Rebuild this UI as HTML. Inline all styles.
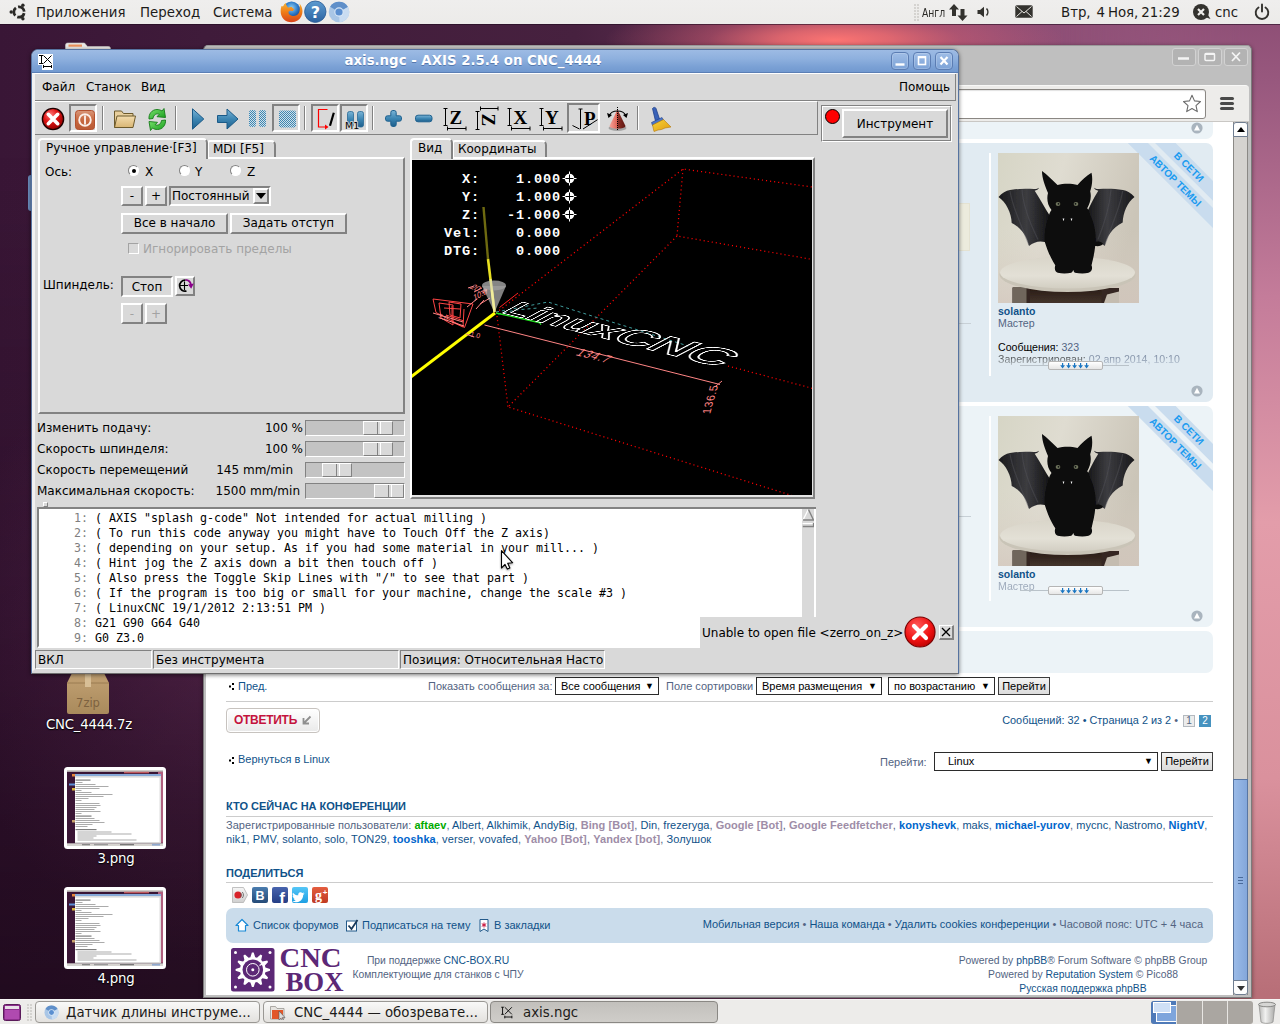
<!DOCTYPE html>
<html lang="ru">
<head>
<meta charset="utf-8">
<title>axis.ngc - AXIS 2.5.4 on CNC_4444</title>
<style>
*{box-sizing:border-box;margin:0;padding:0}
html,body{width:1280px;height:1024px;overflow:hidden}
body{position:relative;font-family:"DejaVu Sans","Liberation Sans",sans-serif;font-size:13.33px;color:#1a1a1a;
 background:#2c0a26;}
.abs{position:absolute}
#desk{left:0;top:0;width:1280px;height:1024px;
 background:
  radial-gradient(ellipse 230px 42px at 835px 40px, rgba(252,116,114,1) 0%, rgba(246,112,114,.8) 25%, rgba(225,100,115,.42) 55%, rgba(200,90,120,0) 100%),
  radial-gradient(ellipse 300px 330px at 250px 640px, rgba(125,58,110,.55) 0%, rgba(112,50,100,.26) 55%, rgba(100,45,90,0) 100%),
  linear-gradient(90deg,#391636 0,#3c1838 8%,#3f1b3a 16%,#47213f 45%,#6a3459 62%,#8a4a72 76%,#9b5c82 100%);
}
#deskr{left:1060px;top:0;width:220px;height:1024px;background:linear-gradient(180deg,#8b4c73 0,#98587e 8%,#c47c9a 29%,#e39daa 51%,#da919d 76%,#b86f78 97%);-webkit-mask-image:linear-gradient(90deg,transparent 0,rgba(0,0,0,.55) 50%,#000 85%);mask-image:linear-gradient(90deg,transparent 0,rgba(0,0,0,.55) 50%,#000 85%)}
#deskdark{left:0;top:0;width:700px;height:1024px;background:linear-gradient(180deg,rgba(12,0,10,0) 15%,rgba(12,0,10,.22) 60%,rgba(10,0,8,.52) 100%);-webkit-mask-image:linear-gradient(90deg,#000 0,#000 30%,transparent 100%);mask-image:linear-gradient(90deg,#000 0,#000 30%,transparent 100%)}

/* ---------- top panel ---------- */
#tpanel{left:0;top:0;width:1280px;height:24px;background:linear-gradient(#efeeed,#ecebe9);box-shadow:0 1px 0 rgba(30,10,30,.55);font-size:13.33px;color:#1c1b19}
#tpanel span{position:absolute;top:4.5px;white-space:nowrap;line-height:16px}
/* ---------- bottom panel ---------- */
#bpanel{left:0;top:999px;width:1280px;height:25px;background:#edecea;border-top:1px solid #f6f5f4;font-size:13.33px;color:#1c1b19}
.dl{position:absolute;text-align:center;color:#fff;font-size:13.33px;letter-spacing:-.25px;line-height:18px;text-shadow:0 1px 1px #000,0 0 2px rgba(0,0,0,.8);white-space:nowrap}
.task{position:absolute;top:1px;height:22px;border:1px solid #9a9894;border-radius:4px;background:linear-gradient(#f9f9f8,#e3e1de);white-space:nowrap;overflow:hidden}
.task b{position:absolute;top:2px;font-weight:normal;line-height:17px}

/* ---------- chrome window ---------- */
#chrome{left:203px;top:45px;width:1049px;height:953px;background:#bfbfbf;border:1px solid #7b7b7b;border-top-color:#9a9a9a;border-radius:5px 5px 0 0;box-shadow:0 1px 4px rgba(0,0,0,.45);overflow:hidden}
#cx{left:-204px;top:-46px;width:0;height:0;font-family:"Liberation Sans","DejaVu Sans",sans-serif;font-size:11px;color:#536482}
#cx div,#cx span,#cx svg,#cx a{position:absolute}
.cb{width:24px;height:18px;background:#b3b3b3;border:1px solid #d2d2d2;border-radius:3px}
#cx a{color:#105289;white-space:nowrap}
#cx .p{white-space:nowrap;line-height:14px}
.sel{background:#fff;border:1px solid #2b2b2b;color:#000;font-size:11px;line-height:16px;padding-left:5px;white-space:nowrap;height:18px}
.sel:after{content:"▼";position:absolute;right:4px;top:0;font-size:9px;color:#000}
.go{background:linear-gradient(#f3f3f3,#dcdcdc);border:1px solid #3c3c3c;color:#000;font-size:11px;line-height:16px;text-align:center;height:18px;white-space:nowrap}
.post{border-radius:0 7px 7px 0}
.hr{height:1px;background:#ccc}
.rib{width:200px;height:200px;transform:rotate(45deg);transform-origin:50% 50%}
.rib b{left:-40px;width:280px;height:19px;background:#c9dcee;color:#1b9df2;font-size:11px;font-weight:bold;text-align:center;line-height:19px;white-space:nowrap}
.hnd{left:1020px;width:109px;height:9px}
.hnd:before{content:"";position:absolute;left:0;top:4px;width:109px;height:1px;background:#b9c2c9}
.hnd:after{content:"";position:absolute;left:28px;top:0;width:53px;height:7px;background:linear-gradient(#fff,#e6e6e6);border:1px solid #b5b5b5;border-radius:2px}
.hnd svg{left:40px;top:1.500px;z-index:2}
.h3{font-weight:bold;font-size:11px;color:#105289;white-space:nowrap;line-height:14px}
#cx a.s{position:static}
#cx a.g{color:#00aa00;font-weight:bold}
#cx a.b{color:#9e8da7;font-weight:bold}
#cx a.m{color:#0066cc;font-weight:bold}
.pg{width:12px;height:12px;line-height:10px;border:1px solid #b4bac0;background:#ececec;color:#536482;text-align:center;font-size:10px}
.pg.cur{background:#4692bf;border-color:#4692bf;color:#fff}

/* ---------- AXIS window ---------- */
#axis{left:31px;top:49px;width:928px;height:625px;background:#d9d9d9;border:1px solid #5673a0;border-bottom-color:#6e6e6e;border-radius:7px 7px 0 0;box-shadow:0 1px 4px rgba(0,0,0,.55)}
#ax{left:-32px;top:-50px;width:0;height:0}
#ax div,#ax span,#ax svg{position:absolute}
#atitle{left:32px;top:50px;width:926px;height:23px;background:linear-gradient(#9dbbe4,#8eb0de 40%,#7ba1d5 75%,#7299d0);border-radius:6px 6px 0 0;border-bottom:1px solid #5b7fb5;color:#fff;font-weight:bold;font-size:13.33px;text-align:center;line-height:21px;text-shadow:0 1px 0 #5578ad;padding-right:44px}
#aframe{left:32px;top:73px;width:926px;height:599px;border:3px solid #f1f1f1;border-top-width:1px;border-top-color:#fff;border-bottom-color:#d9d9d9;border-right-color:#d9d9d9}
.tb{border-radius:4px;border:1px solid #5b7db3;background:linear-gradient(#9fbde6,#7da3d7);box-shadow:inset 0 0 0 1px rgba(255,255,255,.18)}
.rs{border:2px solid;border-color:#fff #828282 #828282 #fff;background:#d9d9d9}
.sk{border:2px solid;border-color:#828282 #fff #fff #828282;background:#d9d9d9}
.rs1{border:1px solid;border-color:#fff #828282 #828282 #fff}
.sk1{border:1px solid;border-color:#828282 #fff #fff #828282}
.t{white-space:nowrap;line-height:16px;font-size:12px;color:#000}
.btn{text-align:center;white-space:nowrap;font-size:12px;color:#000}
.vsep{width:2px;border-left:1px solid #828282;border-right:1px solid #fff}
.mono{font-family:"DejaVu Sans Mono","Liberation Mono",monospace;font-size:11.63px;white-space:pre;line-height:15px;color:#000}
.radio{width:11px;height:11px;border-radius:50%;background:#fff;border:1px solid;border-color:#828282 #fff #fff #828282}
.radio u{position:absolute;left:3px;top:3px;width:4px;height:4px;border-radius:50%;background:#000}
.tr{left:305px;width:100px;height:16px;background:#c3c3c3;border:1px solid;border-color:#828282 #fff #fff #828282}
.th{top:0;width:30px;height:14px;background:#d9d9d9;border:1px solid;border-color:#fff #828282 #828282 #fff}
.th:after{content:"";position:absolute;left:13px;top:0;width:2px;height:12px;border-left:1px solid #828282;border-right:1px solid #fff}
.mono i{font-style:normal;color:#7f7f7f}
</style>
</head>
<body>
<div id="desk" class="abs"></div>
<div id="deskr" class="abs"></div>
<div id="deskdark" class="abs"></div>

<!-- DESKTOP ICONS -->
<div id="icons" class="abs" style="left:0;top:0;width:0;height:0">
 <svg class="abs" style="left:0;top:0" width="0" height="0"><defs>
  <g id="thumb">
   <rect x="0" y="0" width="102" height="82" rx="3.500" fill="#fff"/>
   <rect x="3" y="3" width="96" height="76" fill="#3a1535"/>
   <rect x="3" y="3" width="96" height="1.800" fill="#cfcdc9"/>
   <rect x="60" y="4.800" width="25" height="1.500" fill="#e26a6a" opacity=".8"/>
   <rect x="94" y="4.800" width="5" height="71" fill="#b0607f"/>
   <rect x="8" y="7" width="3" height="2.500" fill="#e8863a"/><rect x="5" y="16.500" width="6" height="2" fill="#5b8fd6"/><rect x="8" y="21" width="3" height="2.500" fill="#d9b53a"/><rect x="8" y="53" width="3" height="2.500" fill="#c7a16a"/>
   <rect x="11" y="7" width="86" height="69" fill="#fff"/>
   <rect x="11" y="7" width="86" height="2" fill="#86a9d8"/><rect x="11" y="9" width="86" height="1.600" fill="#dcdcdc"/>
   <rect x="95.500" y="10" width="1.500" height="66" fill="#dedede"/><rect x="11" y="75" width="86" height="1.300" fill="#d8d8d8"/>
   <g fill="#8f8f8f" opacity=".75">
    <rect x="11.500" y="12.500" width="15" height="1.200" fill="#555"/><rect x="11.500" y="15" width="7" height="1"/><rect x="11.500" y="17" width="20" height="1"/><rect x="11.500" y="19" width="33" height="1"/><rect x="11.500" y="21" width="24" height="1"/><rect x="11.500" y="23" width="6" height="1"/><rect x="11.500" y="25" width="16" height="1"/><rect x="11.500" y="27" width="37" height="1"/><rect x="11.500" y="29" width="28" height="1"/><rect x="11.500" y="31" width="13" height="1"/><rect x="11.500" y="33" width="6" height="1"/>
    <rect x="11.500" y="36" width="24" height="1"/><rect x="11.500" y="38" width="25" height="1"/><rect x="11.500" y="40" width="21" height="1"/><rect x="11.500" y="42" width="19" height="1"/><rect x="11.500" y="44" width="25" height="1"/><rect x="11.500" y="46" width="6" height="1"/>
    <rect x="11.500" y="48.500" width="16" height="1.200" fill="#555"/><rect x="11.500" y="51" width="19" height="1"/><rect x="11.500" y="53" width="24" height="1"/><rect x="11.500" y="55" width="29" height="1"/><rect x="11.500" y="57" width="17" height="1"/><rect x="11.500" y="59" width="12" height="1"/>
    <rect x="11.500" y="62" width="21" height="1.200" fill="#555"/><rect x="13.500" y="64.500" width="34" height="1"/><rect x="13.500" y="66.500" width="54" height="1"/><rect x="13.500" y="68.500" width="19" height="1"/><rect x="13.500" y="70.500" width="16" height="1"/><rect x="13.500" y="72.500" width="59" height="1"/>
   </g>
   <rect x="3" y="76.300" width="96" height="2.700" fill="#d6d4d0"/><rect x="18" y="77" width="8" height="1.300" fill="#888"/><rect x="30" y="77" width="14" height="1.300" fill="#999"/><rect x="56" y="77" width="14" height="1.300" fill="#777"/><rect x="88" y="76.800" width="8" height="1.800" fill="#8fa9d0"/>
  </g>
  <linearGradient id="boxg" x1="0" y1="0" x2="0" y2="1"><stop offset="0" stop-color="#c2a173"/><stop offset="1" stop-color="#a98a5c"/></linearGradient>
 </defs></svg>
 <!-- folder peeking behind AXIS -->
 <svg class="abs" style="left:65px;top:42px" width="46" height="8" viewBox="0 0 46 8"><path d="M.5 8V3a2 2 0 0 1 2-2h17l3 3.500h21a2 2 0 0 1 2 2V8z" fill="#e9e8e6" stroke="#c8c6c2" stroke-width=".6"/><rect x="3.500" y="2.500" width="13.500" height="2.200" fill="#e9905a"/></svg>
 <div class="abs" style="left:28px;top:175px;width:10px;height:36px;background:#6b8dbe;border-radius:3px"></div>
 <!-- 7zip box -->
 <svg class="abs" style="left:66px;top:673px" width="44" height="42" viewBox="0 0 44 42"><path d="M1 10L6 0h32l5 10v29a2 2 0 0 1-2 2H3a2 2 0 0 1-2-2z" fill="url(#boxg)"/><path d="M1 10h42" stroke="#9a7d52" stroke-width="1"/><rect x="19" y="0" width="6" height="14" fill="#d8bf96"/><text x="22" y="34" text-anchor="middle" font-family="DejaVu Sans,sans-serif" font-size="11.500" fill="#7d6240">7zip</text></svg>
 <div class="dl" style="left:29px;top:715.500px;width:120px">CNC_4444.7z</div>
 <svg class="abs" style="left:64px;top:767px" width="102" height="82"><use href="#thumb"/></svg>
 <div class="dl" style="left:56px;top:849.500px;width:120px">3.png</div>
 <svg class="abs" style="left:64px;top:887px" width="102" height="82"><use href="#thumb"/></svg>
 <div class="dl" style="left:56px;top:969.500px;width:120px">4.png</div>
</div>

<!-- CHROME -->
<div id="chrome" class="abs"><div id="cx" class="abs">
 <!-- title buttons -->
 <div class="cb" style="left:1172px;top:48px"></div><div class="cb" style="left:1198px;top:48px"></div><div class="cb" style="left:1224px;top:48px"></div>
 <svg style="left:1172px;top:48px" width="76" height="18" viewBox="0 0 76 18"><g fill="none" stroke="#f4f4f4" stroke-width="1.8"><path d="M6 10.5h11" stroke-width="2.4"/><rect x="33" y="5.5" width="9.5" height="7" rx="1" stroke-width="1.5"/><path d="M33 6h9.5" stroke-width="2"/><path d="M60 4.5l8 8.5M68 4.5l-8 8.5"/></g></svg>
 <!-- toolbar -->
 <div style="left:206px;top:85px;width:1043px;height:37px;background:#edecea;border-top:1px solid #f8f8f7;border-bottom:1px solid #c9c7c4;border-radius:0 4px 0 0"></div>
 <div style="left:600px;top:89px;width:606px;height:30px;background:#fff;border:1px solid #8a8783;border-radius:3px;box-shadow:inset 0 1px 1px rgba(0,0,0,.12)"></div>
 <svg style="left:1182px;top:94px" width="20" height="19" viewBox="0 0 20 19"><path d="M10 1.3l2.5 5.6 6 .6-4.5 4.1 1.3 6-5.3-3.1-5.3 3.1 1.3-6L1.5 7.5l6-.6z" fill="#fff" stroke="#6b6b6b" stroke-width="1.1" stroke-linejoin="round"/></svg>
 <div style="left:1220px;top:97px;width:14px;height:3px;background:#4a4a4a;border-radius:1.500px;box-shadow:0 5px 0 #4a4a4a,0 10px 0 #4a4a4a"></div>
 <!-- page -->
 <div id="page" style="left:206px;top:122px;width:1027px;height:873px;background:#fff"></div>
 <svg width="0" height="0" style="left:0;top:0"><defs>
  <linearGradient id="catbg" x1="0" y1="0" x2="1" y2=".3"><stop offset="0" stop-color="#d6d5c5"/><stop offset=".45" stop-color="#dfdcd1"/><stop offset="1" stop-color="#cbc5b8"/></linearGradient><linearGradient id="catvg" x1="0" y1="0" x2="0" y2="1"><stop offset=".5" stop-color="#d8cfc4" stop-opacity="0"/><stop offset="1" stop-color="#d3c6bd" stop-opacity=".7"/></linearGradient><linearGradient id="stsh" x1="0" y1="0" x2="0" y2="1"><stop offset="0" stop-color="#2a1d17"/><stop offset="1" stop-color="#43342b"/></linearGradient><linearGradient id="wingg2" x1="1" y1="0" x2="0" y2="0"><stop offset="0" stop-color="#1a1a1c"/><stop offset=".55" stop-color="#3c3c40"/><stop offset="1" stop-color="#121214"/></linearGradient>
  <linearGradient id="stoolg" x1="0" y1="0" x2="0" y2="1"><stop offset="0" stop-color="#d9d5c9"/><stop offset=".6" stop-color="#e3e0d6"/><stop offset="1" stop-color="#d2cec2"/></linearGradient>
  <linearGradient id="wingg" x1="0" y1="0" x2="1" y2="0"><stop offset="0" stop-color="#1a1a1c"/><stop offset=".55" stop-color="#3c3c40"/><stop offset="1" stop-color="#121214"/></linearGradient>
  <filter id="soft" x="0" y="0" width="1" height="1"><feGaussianBlur stdDeviation=".45"/></filter>
  <g id="cat" filter="url(#soft)">
   <rect x="-2" y="-2" width="145" height="154" fill="url(#catbg)"/>
   <rect width="141" height="150" fill="url(#catvg)"/>
   <path d="M14.500 150v-15h106.500v15z" fill="#352720"/>
   <path d="M32 150v-14h71.500v14z" fill="url(#stsh)"/>
   <path d="M14.500 150v-16h14v16z" fill="#6f665c"/><path d="M106 150l3-8.500 12-3v11.500z" fill="#c4bcb0"/>
   <ellipse cx="69.500" cy="121.500" rx="68" ry="17.500" fill="#c9c4b7"/>
   <ellipse cx="69.500" cy="119.500" rx="67.500" ry="16" fill="url(#stoolg)"/>
   <path d="M.5 44C4 40 8 37.500 12 37c8-1.500 17-1.500 24-1 2 .2 3.500-.300 5-1.200-.8 1.700-2.300 2.700-4.300 2.900C42 46 47 55 52 63l-5 26c-6-1.500-11 0-16 4-2-9-7-18-17.300-23C13.500 60 8 49 .5 44z" fill="url(#wingg)"/>
   <path d="M136.500 44c-3.500-4-7.500-6.500-11.500-7-8-1.500-17-1.500-24-1-2 .2-3.500-.300-5-1.200.8 1.700 2.300 2.700 4.300 2.900C95 46 91 55 87 63l6 26c5.500-1.500 9.500 0 13.700 4 2-9 7-18 18-23.500C125 60 129.500 49 136.500 44z" fill="url(#wingg2)"/>
   <path d="M12 38c2 12 6 22 19 54M24 36.500c1 14 6 30 16 50M124.700 38c-2 12-6 22-18 54M113 36.500c-1 14-5 30-13 50" fill="none" stroke="#55555a" stroke-opacity=".45" stroke-width="1.200"/>
   <path d="M44 18c5 3.500 11 9.500 15.500 14 6-1.600 14-1.600 20 0 4-4.500 9-9.500 14-12.200 1.500 6 .5 13-1.300 18.500 1.500 6 0 12-3 17 1.500 2 2.500 4.500 3 7 3.500 7 6 17 5.500 26 2.500-.5 6 .5 7.500 2.500-1 2-4.500 2.800-8 2.300-.5 6-2 12-3.700 19.200 1.500 3.500 0 6.500-3 7.500-4 1-9 .8-13.500 0-1-.8-1.500-1.700-1.700-3-.3 1.300-1 2.300-2 3-4 .8-9 1-13.500 0-3-1-3.500-4.500-2.500-7.500C51.500 103 49 96 46.500 88c0-8 1-16 4-24 .5-2.500 1.500-5 3-7-4-5-5-11-3.500-17C47 33 44 25 44 18z" fill="#0a0a0b"/>
   <ellipse cx="60" cy="51" rx="2.400" ry="1.900" fill="#6e735c"/><ellipse cx="78" cy="51" rx="2.400" ry="1.900" fill="#6e735c"/><circle cx="60.500" cy="50.800" r=".9" fill="#111"/><circle cx="77.500" cy="50.800" r=".9" fill="#111"/>
   <path d="M64.600 65.500l.9 2.800.9-2.800zM72.600 65.500l.9 2.800.9-2.800z" fill="#f4f4f4"/>
  </g>
  <g id="topic"><circle cx="6" cy="6" r="5.600" fill="#a9b4be"/><path d="M6 2.800L9 8.500H3z" fill="#fff"/></g>
 </defs></svg>
 <!-- post 1 tail -->
 <div class="post" style="left:206px;top:122px;width:1007px;height:17px;background:#ecf3f7;border-radius:0 0 7px 0"></div>
 <svg style="left:1191px;top:122px" width="12" height="12"><use href="#topic"/></svg>
 <!-- post 2 -->
 <div class="post" style="left:206px;top:143px;width:1007px;height:259px;background:#e1ebf2;overflow:hidden">
 </div>
 <svg style="left:1120px;top:143px" width="93" height="90" viewBox="1120 143 93 90"><path d="M1155 143h20.600L1213 181v19.700zM1127.800 143H1148l65 65v19.900z" fill="#c9dcee"/><g font-family="Liberation Sans,sans-serif" font-weight="bold" font-size="10" fill="#1c9bf0" text-anchor="middle"><text transform="translate(1186.500 169.500) rotate(45)">В СЕТИ</text><text transform="translate(1173 183) rotate(45)">АВТОР ТЕМЫ</text></g></svg>
 <div style="left:958px;top:203px;width:12px;height:48px;background:#ecebdd;border:1px solid #e4e2d2;border-left:0"></div>
 <div style="left:958px;top:323px;width:13px;height:1px;background:#c8d0d6"></div>
 <div style="left:989px;top:153px;width:2px;height:223px;background:#fff"></div>
 <svg style="left:998px;top:153px" width="141" height="150"><use href="#cat"/></svg>
 <a style="left:998px;top:304px;font-weight:bold;line-height:14px;font-size:10.500px">solanto</a>
 <span class="p" style="left:998px;top:316px;font-size:10.600px">Мастер</span>
 <span class="p" style="left:998px;top:340px;font-size:10.600px"><span style="position:static;color:#000">Сообщения:</span> 323</span>
 <span class="p" style="left:998px;top:352px;opacity:.62;font-size:10.600px"><span style="position:static;color:#000">Зарегистрирован:</span> 02 апр 2014, 10:10</span>
 <div style="left:998px;top:358px;width:200px;height:10px;background:linear-gradient(rgba(225,235,242,0),#e1ebf2)"></div>
 <div class="hnd" style="top:361px"><svg width="30" height="6" viewBox="0 0 30 6"><path id="dar" d="M2 0h1.200v2.200H5L2.600 5.500.2 2.200H2z" fill="#1b76c2"/><use href="#dar" x="6"/><use href="#dar" x="12"/><use href="#dar" x="18"/><use href="#dar" x="24"/></svg></div>
 <svg style="left:1191px;top:385px" width="12" height="12"><use href="#topic"/></svg>
 <!-- post 3 -->
 <div class="post" style="left:206px;top:406px;width:1007px;height:221px;background:#ecf3f7;overflow:hidden">
 </div>
 <svg style="left:1120px;top:406px" width="93" height="90" viewBox="1120 143 93 90"><path d="M1155 143h20.600L1213 181v19.700zM1127.800 143H1148l65 65v19.900z" fill="#c9dcee"/><g font-family="Liberation Sans,sans-serif" font-weight="bold" font-size="10" fill="#1c9bf0" text-anchor="middle"><text transform="translate(1186.500 169.500) rotate(45)">В СЕТИ</text><text transform="translate(1173 183) rotate(45)">АВТОР ТЕМЫ</text></g></svg>
 <div style="left:958px;top:516px;width:13px;height:1px;background:#c8d0d6"></div>
 <div style="left:989px;top:416px;width:2px;height:185px;background:#fff"></div>
 <svg style="left:998px;top:416px" width="141" height="150"><use href="#cat"/></svg>
 <a style="left:998px;top:567px;font-weight:bold;line-height:14px;font-size:10.500px">solanto</a>
 <span class="p" style="left:998px;top:579px;opacity:.5;font-size:10.600px">Мастер</span>
 <div class="hnd" style="top:586px"><svg width="30" height="6" viewBox="0 0 30 6"><use href="#dar"/><use href="#dar" x="6"/><use href="#dar" x="12"/><use href="#dar" x="18"/><use href="#dar" x="24"/></svg></div>
 <svg style="left:1191px;top:610px" width="12" height="12"><use href="#topic"/></svg>
 <!-- box 4 -->
 <div class="post" style="left:206px;top:631px;width:1007px;height:42px;background:#ecf3f7"></div>

 <!-- display options -->
 <svg style="left:229px;top:683px" width="5" height="7" viewBox="0 0 5 7"><path d="M3 0h2v2H3zM0 2.500h2v2H0zM3 5h2v2H3z" fill="#000"/></svg>
 <a style="left:238px;top:680px">Пред.</a>
 <span class="p" style="left:428px;top:679px">Показать сообщения за:</span>
 <div class="sel" style="left:555px;top:677px;width:104px">Все сообщения</div>
 <span class="p" style="left:666px;top:679px">Поле сортировки</span>
 <div class="sel" style="left:756px;top:677px;width:126px">Время размещения</div>
 <div class="sel" style="left:888px;top:677px;width:107px">по возрастанию</div>
 <div class="go" style="left:998px;top:677px;width:52px">Перейти</div>
 <div class="hr" style="left:226px;top:701px;width:987px"></div>
 <div style="left:226px;top:708px;width:94px;height:25px;border:1px solid #c7c3bf;border-radius:4px;background:linear-gradient(#fff,#e9e9e9);box-shadow:0 0 0 1px #fff inset"></div>
 <span style="left:234px;top:713px;font-weight:bold;font-size:12px;line-height:15px;color:#c4133d;letter-spacing:-.28px;white-space:nowrap">ОТВЕТИТЬ</span>
 <svg style="left:302px;top:715px" width="10" height="10" viewBox="0 0 10 10"><path d="M8.500 1.500L2 8M1.500 3v5.500H7" fill="none" stroke="#8f8f8f" stroke-width="1.800"/></svg>
 <span class="p" style="left:878px;top:713px;width:300px;text-align:right;font-size:10.900px"><a style="position:static">Сообщений: 32 • Страница <b style="font-weight:normal">2</b> из <b style="font-weight:normal">2</b></a> •</span>
 <span class="pg" style="left:1183px;top:715px">1</span><span class="pg cur" style="left:1199px;top:715px">2</span>
 <svg style="left:229px;top:757px" width="5" height="7" viewBox="0 0 5 7"><path d="M3 0h2v2H3zM0 2.500h2v2H0zM3 5h2v2H3z" fill="#000"/></svg>
 <a style="left:238px;top:753px">Вернуться в Linux</a>
 <span class="p" style="left:880px;top:755px">Перейти:</span>
 <div class="sel" style="left:934px;top:752px;width:224px;height:19px;padding-left:13px;line-height:17px">Linux</div>
 <div class="go" style="left:1161px;top:752px;width:52px;height:19px;line-height:17px">Перейти</div>
 <span class="h3" style="left:226px;top:799px">КТО СЕЙЧАС НА КОНФЕРЕНЦИИ</span>
 <div class="hr" style="left:226px;top:816px;width:987px"></div>
 <span class="p" style="left:226px;top:818px;letter-spacing:.036px">Зарегистрированные пользователи: <a class="s g">aftaev</a>, <a class="s">Albert</a>, <a class="s">Alkhimik</a>, <a class="s">AndyBig</a>, <a class="s b">Bing [Bot]</a>, <a class="s">Din</a>, <a class="s">frezeryga</a>, <a class="s b">Google [Bot]</a>, <a class="s b">Google Feedfetcher</a>, <a class="s m">konyshevk</a>, <a class="s">maks</a>, <a class="s m">michael-yurov</a>, <a class="s">mycnc</a>, <a class="s">Nastromo</a>, <a class="s m">NightV</a>,</span>
 <span class="p" style="left:226px;top:832px;letter-spacing:.083px"><a class="s">nik1</a>, <a class="s">PMV</a>, <a class="s">solanto</a>, <a class="s">solo</a>, <a class="s">TON29</a>, <a class="s m">tooshka</a>, <a class="s">verser</a>, <a class="s">vovafed</a>, <a class="s b">Yahoo [Bot]</a>, <a class="s b">Yandex [bot]</a>, <a class="s">Золушок</a></span>
 <span class="h3" style="left:226px;top:866px">ПОДЕЛИТЬСЯ</span>
 <div class="hr" style="left:226px;top:882px;width:987px"></div>
 <svg style="left:231px;top:886px" width="100" height="18" viewBox="231 886 100 18">
  <defs><linearGradient id="vkg" x1="0" y1="0" x2="0" y2="1"><stop offset="0" stop-color="#4a7cae"/><stop offset="1" stop-color="#234a78"/></linearGradient><linearGradient id="fbg" x1="0" y1="0" x2="0" y2="1"><stop offset="0" stop-color="#4864ae"/><stop offset="1" stop-color="#233d85"/></linearGradient><linearGradient id="twg" x1="0" y1="0" x2="0" y2="1"><stop offset="0" stop-color="#55c6f7"/><stop offset="1" stop-color="#1d9fe3"/></linearGradient><linearGradient id="gpg" x1="0" y1="0" x2="0" y2="1"><stop offset="0" stop-color="#e45d3f"/><stop offset="1" stop-color="#bf3a22"/></linearGradient><linearGradient id="lig" x1="0" y1="0" x2="0" y2="1"><stop offset="0" stop-color="#f6f6f6"/><stop offset="1" stop-color="#cfcfcf"/></linearGradient></defs>
  <path d="M232.500 887.500h11l4 7.500-4 7.500h-11z" fill="url(#lig)" stroke="#b3b3b3" stroke-width=".8"/><circle cx="238" cy="895" r="3.600" fill="#d8232a"/><path d="M240.500 893c1 1.200 1 2.800 0 4M242.300 892c1.500 1.800 1.500 4.200 0 6" fill="none" stroke="#555" stroke-width=".8"/>
  <rect x="252" y="887" width="16" height="16" rx="2" fill="url(#vkg)"/>
  <rect x="272" y="887" width="16" height="16" rx="2" fill="url(#fbg)"/>
  <rect x="292" y="887" width="16" height="16" rx="2" fill="url(#twg)"/>
  <rect x="312" y="887" width="16" height="16" rx="2" fill="url(#gpg)"/>
  <g fill="#fff" font-family="Liberation Sans,sans-serif" font-weight="bold"><text x="260" y="900" font-size="12.500" text-anchor="middle">B</text><text x="282" y="903.500" font-size="17" text-anchor="middle">f</text><text x="318.500" y="899.500" font-size="14" text-anchor="middle" font-family="Liberation Serif,serif">g</text><text x="325" y="895" font-size="8" text-anchor="middle">+</text></g>
  <path d="M305 891.500c-.6.300-1.200.4-1.800.5.700-.4 1.100-1 1.400-1.700-.6.400-1.300.6-2 .8-1.200-1.300-3.400-1-4.300.6-.3.600-.4 1.300-.2 2-2.400-.1-4.500-1.300-5.900-3-.8 1.400-.4 3 .9 3.900-.5 0-.9-.2-1.300-.4 0 1.400 1 2.600 2.300 2.900-.4.100-.9.100-1.300 0 .4 1.200 1.500 2 2.700 2-1.200 1-2.700 1.400-4.200 1.200 4.500 2.800 10.500.3 11.900-4.800.2-.7.300-1.500.3-2.200.6-.5 1.100-1.100 1.500-1.800z" fill="#fff" transform="translate(30 91) scale(.9)"/>
 </svg>

 <!-- footer nav -->
 <div style="left:226px;top:908px;width:987px;height:35px;background:#cadceb;border-radius:7px"></div>
 <svg style="left:235px;top:918px" width="14" height="14" viewBox="0 0 14 14"><path d="M7 1.500L1 7.500h2.500V13h7V7.500H13z" fill="#fff" stroke="#1a8ad6" stroke-width="1.200" stroke-linejoin="round"/></svg>
 <a style="left:253px;top:919px">Список форумов</a>
 <svg style="left:346px;top:919px" width="13" height="13" viewBox="0 0 13 13"><rect x=".5" y="2" width="10" height="10" fill="#fff" stroke="#235a8a"/><path d="M2.500 6.500l3 3.500 6-9" fill="none" stroke="#1a3a5a" stroke-width="1.800"/></svg>
 <a style="left:362px;top:919px">Подписаться на тему</a>
 <svg style="left:479px;top:919px" width="10" height="13" viewBox="0 0 10 13"><path d="M1 .5h8v12L5 10l-4 2.500z" fill="#fff" stroke="#235a8a"/><path d="M5 3.500v5M2.800 4.700l4.400 2.600M7.200 4.700L2.800 7.300" stroke="#c8143c" stroke-width="1"/></svg>
 <a style="left:494px;top:919px">В закладки</a>
 <span class="p" style="left:613px;top:917px;width:590px;text-align:right"><a style="position:static">Мобильная версия</a> • <a style="position:static">Наша команда</a> • <a style="position:static">Удалить cookies конференции</a> • Часовой пояс: UTC + 4 часа</span>
 <svg style="left:231px;top:948px" width="114" height="45" viewBox="231 948 114 45">
  <rect x="231" y="948" width="43.500" height="43.500" rx="2.500" fill="#5c2876"/>
  <g fill="#fff"><circle cx="235.500" cy="952.500" r="1.500"/><circle cx="270" cy="952.500" r="1.500"/><circle cx="235.500" cy="987" r="1.500"/><circle cx="270" cy="987" r="1.500"/></g>
  <path d="M250.4 957.2L251.9 952.6L253.7 952.6L255.2 957.2L257.0 957.7L260.6 954.5L262.2 955.4L261.2 960.1L262.5 961.4L267.2 960.4L268.1 962.0L264.9 965.6L265.4 967.4L270.0 968.9L270.0 970.7L265.4 972.2L264.9 974.0L268.1 977.6L267.2 979.2L262.5 978.2L261.2 979.5L262.2 984.2L260.6 985.1L257.0 981.9L255.2 982.4L253.7 987.0L251.9 987.0L250.4 982.4L248.6 981.9L245.0 985.1L243.4 984.2L244.4 979.5L243.1 978.2L238.4 979.2L237.5 977.6L240.7 974.0L240.2 972.2L235.6 970.7L235.6 968.9L240.2 967.4L240.7 965.6L237.5 962.0L238.4 960.4L243.1 961.4L244.4 960.1L243.4 955.4L245.0 954.5L248.6 957.7z" fill="#fff"/>
  <circle cx="252.800" cy="969.800" r="10.300" fill="#5c2876"/>
  <circle cx="252.800" cy="969.800" r="6.300" fill="none" stroke="#fff" stroke-width="1"/><circle cx="252.800" cy="969.800" r="1.500" fill="#fff"/><path d="M259.500 965.500l2.500-1.500" stroke="#fff" stroke-width="1.300"/>
  <g font-family="Liberation Serif,serif" font-weight="bold" font-size="28" fill="#5c2876"><text x="279.500" y="967" textLength="62" lengthAdjust="spacingAndGlyphs">CNC</text><text x="285.500" y="991" textLength="58" lengthAdjust="spacingAndGlyphs">BOX</text></g>
 </svg>

 <span class="p" style="left:338px;top:953.500px;width:200px;text-align:center;font-size:10.350px;color:#536482">При поддержке <a style="position:static">CNC-BOX.RU</a></span>
 <span class="p" style="left:338px;top:967.500px;width:200px;text-align:center;font-size:10.350px;color:#536482">Комплектующие для станков с ЧПУ</span>
 <span class="p" style="left:933px;top:953.500px;width:300px;text-align:center;font-size:10.350px;color:#536482">Powered by <a style="position:static">phpBB</a>® Forum Software © phpBB Group</span>
 <span class="p" style="left:933px;top:967.500px;width:300px;text-align:center;font-size:10.350px;color:#536482">Powered by <a style="position:static">Reputation System</a> © Pico88</span>
 <span class="p" style="left:933px;top:981.500px;width:300px;text-align:center;font-size:10.350px;color:#536482"><a style="position:static">Русская поддержка phpBB</a></span>

 <!-- scrollbar -->
 <div style="left:1233px;top:122px;width:15px;height:873px;background:#d5d3d0;border-left:1px solid #8b8986;border-right:1px solid #8b8986"></div>
 <div style="left:1233px;top:122px;width:15px;height:15px;background:#fdfdfd;border:1px solid #6f7d90;border-radius:3px 3px 0 0"></div>
 <svg style="left:1237px;top:127px" width="8" height="5" viewBox="0 0 8 5"><path d="M0 5h8L4 0z" fill="#000"/></svg>
 <div style="left:1233px;top:779px;width:15px;height:202px;background:linear-gradient(90deg,#9bbbe8,#8fb1e1 50%,#84a7da);border:1px solid #5876a3"></div>
 <div style="left:1238px;top:877px;width:5px;height:1px;background:#4a6a9a;box-shadow:0 3px 0 #4a6a9a,0 6px 0 #4a6a9a"></div>
 <div style="left:1233px;top:980px;width:15px;height:15px;background:#fdfdfd;border:1px solid #6f7d90;border-radius:0 0 3px 3px"></div>
 <svg style="left:1237px;top:986px" width="8" height="5" viewBox="0 0 8 5"><path d="M0 0h8L4 5z" fill="#333"/></svg>
</div></div>

<!-- AXIS -->
<div id="axis" class="abs"><div id="ax" class="abs">
 <div id="atitle">axis.ngc - AXIS 2.5.4 on CNC_4444</div>
 <div id="aframe"></div>
 <!-- title buttons -->
 <div class="tb" style="left:891px;top:52px;width:18px;height:18px"></div>
 <div class="tb" style="left:913px;top:52px;width:18px;height:18px"></div>
 <div class="tb" style="left:935px;top:52px;width:18px;height:18px"></div>
 <svg style="left:891px;top:52px" width="62" height="18" viewBox="0 0 62 18"><g fill="none" stroke="#fff" stroke-width="2"><path d="M4.5 12.5h9" stroke-width="2.4"/><rect x="27.5" y="5" width="7" height="7.5" stroke-width="1.6"/><path d="M27 5.2h8" stroke-width="2.2"/><path d="M49.5 5l7 7.5M56.5 5l-7 7.5" stroke-width="2.2"/></g></svg>
 <!-- title icon -->
 <svg style="left:37px;top:53px" width="18" height="18" viewBox="0 0 18 18"><path d="M1 1h15v16H5v-5H1z" fill="#fff"/><g stroke="#000" stroke-width="1" fill="none"><path d="M2 2.500h4M4.500 2.500v8M2 10.500h4"/><path d="M6.5 2.5l8 8M14.5 2.5l-8 8"/><path d="M6.5 13.5h8M6.5 12v3M14.5 12v3"/></g></svg>

 <!-- menubar -->
 <div style="left:35px;top:74px;width:921px;height:27px;border-right:1px solid #828282;border-bottom:1px solid #828282"></div>
 <span class="t" style="left:42px;top:79px">Файл</span><span class="t" style="left:86px;top:79px">Станок</span><span class="t" style="left:141px;top:79px">Вид</span><span class="t" style="left:899px;top:79px">Помощь</span>

 <!-- toolbar -->
 <div style="left:35px;top:101px;width:783px;height:34px;border-top:1px solid #fff;border-right:1px solid #828282;border-bottom:1px solid #828282"></div>
 <div class="sk" style="left:69px;top:104px;width:28px;height:28px"></div>
 <div class="vsep" style="left:102px;top:106px;height:24px"></div>
 <div class="vsep" style="left:175px;top:106px;height:24px"></div>
 <div class="sk" style="left:272px;top:104px;width:28px;height:28px"></div>
 <div class="vsep" style="left:304px;top:106px;height:24px"></div>
 <div class="sk" style="left:311px;top:104px;width:28px;height:28px"></div>
 <div class="sk" style="left:340px;top:104px;width:28px;height:28px"></div>
 <div class="vsep" style="left:372px;top:106px;height:24px"></div>
 <div class="sk" style="left:567px;top:103px;width:33px;height:30px"></div>
 <div class="vsep" style="left:637px;top:106px;height:24px"></div>
<svg style="left:35px;top:101px" width="783" height="34" viewBox="35 101 783 34">
 <defs>
  <radialGradient id="esg" cx=".38" cy=".3" r=".75"><stop offset="0" stop-color="#ff7b7b"/><stop offset=".45" stop-color="#e01515"/><stop offset="1" stop-color="#8e0000"/></radialGradient>
  <linearGradient id="pwg" x1="0" y1="0" x2="0" y2="1"><stop offset="0" stop-color="#d9977a"/><stop offset=".5" stop-color="#c8683f"/><stop offset="1" stop-color="#b95a35"/></linearGradient>
  <linearGradient id="blg" x1="0" y1="0" x2="0" y2="1"><stop offset="0" stop-color="#7bb4d6"/><stop offset=".5" stop-color="#3d86b3"/><stop offset="1" stop-color="#1d5f8c"/></linearGradient>
  <linearGradient id="fog" x1="0" y1="0" x2="0" y2="1"><stop offset="0" stop-color="#f3dcae"/><stop offset="1" stop-color="#d9b674"/></linearGradient>
  <linearGradient id="grg" x1="0" y1="0" x2="1" y2="1"><stop offset="0" stop-color="#7be36f"/><stop offset="1" stop-color="#169c1c"/></linearGradient>
  <linearGradient id="cng" x1="0" y1="0" x2="1" y2="0"><stop offset="0" stop-color="#f7a59b"/><stop offset=".45" stop-color="#e0685c"/><stop offset=".55" stop-color="#8b2c24"/><stop offset="1" stop-color="#5d1812"/></linearGradient>
  <linearGradient id="brg" x1="0" y1="0" x2="1" y2="1"><stop offset="0" stop-color="#f7d438"/><stop offset="1" stop-color="#e09a12"/></linearGradient>
  <pattern id="stp" width="2" height="2" patternUnits="userSpaceOnUse"><rect width="2" height="2" fill="#cfe0ea"/><rect width="1" height="1" fill="#3f86b0"/><rect x="1" y="1" width="1" height="1" fill="#3f86b0"/></pattern>
 </defs>
 <!-- estop -->
 <circle cx="53" cy="119" r="10.600" fill="url(#esg)" stroke="#1c0000" stroke-width="1.400"/>
 <path d="M48.300 114.300l9.400 9.400M57.700 114.300l-9.400 9.400" stroke="#fff" stroke-width="3.600" stroke-linecap="round"/>
 <!-- power -->
 <rect x="75.500" y="110.500" width="19" height="19" rx="3" fill="url(#pwg)" stroke="#b4512f"/>
 <circle cx="85" cy="120" r="5.800" fill="none" stroke="#fbeee8" stroke-width="1.900"/><path d="M85 116.300v7.400" stroke="#fbeee8" stroke-width="1.900" stroke-linecap="round"/>
 <!-- folder -->
 <path d="M114.500 127.500v-16.500h7l2 2.500h9.500v2.500" fill="#e8cf9d" stroke="#6d5a2c" stroke-linejoin="round"/>
 <path d="M114.500 127.500l2.500-11.500h18.500l-2.500 11.500z" fill="url(#fog)" stroke="#6d5a2c" stroke-linejoin="round"/>
 <!-- refresh -->
 <path d="M149 119c-.5-5 3-9.500 8-9.500 2 0 3.500.5 5 1.500l2-2.500 1.500 9-8.500-.8 2.300-2.400c-2.800-1.300-5.800.4-6.300 4.200z" fill="url(#grg)" stroke="#157a18" stroke-width=".9" stroke-linejoin="round"/>
 <path d="M165.500 120c.5 5-3 9.500-8 9.500-2 0-3.500-.5-5-1.500l-2 2.500-1.500-9 8.500.8-2.300 2.400c2.800 1.300 5.800-.4 6.300-4.200z" fill="url(#grg)" stroke="#157a18" stroke-width=".9" stroke-linejoin="round"/>
 <!-- play -->
 <path d="M192.500 108.800v20.400l11.300-10.200z" fill="url(#blg)" stroke="#1a5a88" stroke-linejoin="round"/>
 <!-- step -->
 <path d="M217.500 115.500h9.500v-6.500l11 10-11 10v-6.500h-9.500z" fill="url(#blg)" stroke="#1a5a88" stroke-linejoin="round"/>
 <!-- pause (disabled) -->
 <rect x="249" y="110" width="7" height="17" rx="2.500" fill="url(#stp)"/><rect x="259" y="110" width="7" height="17" rx="2.500" fill="url(#stp)"/>
 <!-- stop (disabled) -->
 <rect x="279" y="110.500" width="17" height="17" rx="2" fill="url(#stp)"/>
 <!-- skip -->
 <path d="M327.500 109.500h-9v17.500h8" fill="none" stroke="#f00" stroke-width="1.200"/><path d="M325 124.500l3.500 2.500-3.500 2.500z" fill="#f00"/>
 <path d="M333.800 112.800l-3.800 13" stroke="#000" stroke-width="2.200"/>
 <!-- M1 -->
 <rect x="347.500" y="111.500" width="6" height="15.500" rx="2" fill="url(#blg)" stroke="#2a6a96" stroke-width=".8"/><rect x="357.500" y="111.500" width="6" height="15.500" rx="2" fill="url(#blg)" stroke="#2a6a96" stroke-width=".8"/>
 <text x="345" y="129" font-family="DejaVu Sans,sans-serif" font-size="9.500" fill="#000" stroke="#d9d9d9" stroke-width="1.600" paint-order="stroke">M1</text>
 <!-- plus / minus -->
 <path d="M390.800 112.500a2 2 0 0 1 2-2h1.400a2 2 0 0 1 2 2v3.300h3.300a2 2 0 0 1 2 2v1.400a2 2 0 0 1-2 2h-3.300v3.300a2 2 0 0 1-2 2h-1.400a2 2 0 0 1-2-2v-3.300h-3.300a2 2 0 0 1-2-2v-1.400a2 2 0 0 1 2-2h3.300z" fill="url(#blg)" stroke="#1f6290"/>
 <rect x="415.500" y="115.200" width="16.500" height="6.600" rx="2.500" fill="url(#blg)" stroke="#1f6290"/>
 <!-- views -->
 <g stroke="#000" stroke-width="1" fill="none">
  <path d="M445.500 108.500v17M443.500 108.500h4M443.500 125.500h4M447.500 128.500h18.500M447.500 126.500v4M466 126.500v4"/>
  <path d="M480.500 108.500h17.500M480.500 106.500v4M498 106.500v4M477.500 111.500v18M475.500 111.500h4M475.500 129.500h4"/>
  <path d="M509.500 108.500v17M507.500 108.500h4M507.500 125.500h4M511.500 128.500h18.500M511.500 126.500v4M530 126.500v4"/>
  <path d="M541.500 108.500v17M539.500 108.500h4M539.500 125.500h4M543.500 128.500h18.500M543.500 126.500v4M562 126.500v4"/>
  <path d="M580.500 109v20M578.500 109h4M572.500 125.500l7 3.500M583 129l14.500-9.300"/>
 </g>
 <g font-family="Liberation Serif,serif" font-weight="bold" font-size="19" fill="#000">
  <text x="449.500" y="124">Z</text>
  <text transform="translate(482 113.500) rotate(90)" x="0" y="0">Z</text>
  <text x="513.500" y="124">X</text>
  <text x="545" y="124">Y</text>
  <text x="584" y="124.500">P</text>
 </g>
 <!-- cone rotate -->
 <ellipse cx="617.500" cy="128" rx="9" ry="3" fill="#000" fill-opacity=".25"/>
 <path d="M617.500 109.500l-8 16.500c0 3.500 16 3.500 16 0z" fill="url(#cng)"/>
 <path d="M609.500 115.500c2-6 14-6 16 0" fill="none" stroke="#000" stroke-width="1.100"/><path d="M607 113l1.500 5 3.500-3zM628 113l-1.500 5-3.500-3z" fill="#000"/>
 <path d="M617.500 107v24" stroke="#000" stroke-width="1" stroke-dasharray="1 1"/>
 <!-- brush -->
 <path d="M652.500 108.500c1-1.500 3-1.500 3.500 0l3.500 10.500-4 2z" fill="#3a62b8" stroke="#20408a" stroke-width=".8"/>
 <path d="M651.500 122.500l10.500-5 1.500 2.500-11 5.500z" fill="#4a76c8" stroke="#20408a" stroke-width=".6"/>
 <path d="M652.500 125l11-5.500 7.500 7.500-6 1-3.500 1.500-3.500.5-4 1.500z" fill="url(#brg)" stroke="#b5780a" stroke-width=".6"/>
</svg>


 <!-- tool button area -->
 <div style="left:821px;top:105px;width:131px;height:37px;border:1px solid;border-color:#828282 #fff #fff #828282"></div>
 <div style="left:822px;top:106px;width:129px;height:35px;border:1px solid;border-color:#fff #828282 #828282 #fff"></div>
 <div style="left:825px;top:109px;width:15px;height:15px;border-radius:50%;background:#f00;border:1px solid #000"></div>
 <div class="rs btn" style="left:842px;top:109px;width:106px;height:29px;line-height:27px">Инструмент</div>

 <!-- left notebook -->
 <div style="left:38px;top:157px;width:367px;height:257px;border:2px solid;border-color:#fff #828282 #828282 #fff"></div>
 <div style="left:207px;top:140px;width:69px;height:17px;border:2px solid;border-color:#fff #828282 #d9d9d9 #fff;border-bottom:0;border-radius:3px 5px 0 0"></div>
 <div style="left:38px;top:138px;width:170px;height:21px;background:#d9d9d9;border:2px solid;border-color:#fff #828282 #d9d9d9 #fff;border-bottom:0;border-radius:4px 5px 0 0"></div>
 <span class="t" style="left:46px;top:140px">Ручное управление·[F3]</span>
 <span class="t" style="left:213px;top:141px">MDI [F5]</span>

 <span class="t" style="left:45px;top:164px">Ось:</span>
 <div class="radio" style="left:128px;top:165px"><u></u></div><span class="t" style="left:145px;top:164px">X</span>
 <div class="radio" style="left:179px;top:165px"></div><span class="t" style="left:195px;top:164px">Y</span>
 <div class="radio" style="left:230px;top:165px"></div><span class="t" style="left:247px;top:164px">Z</span>
 <div class="rs btn" style="left:121px;top:186px;width:22px;height:20px;line-height:16px">-</div>
 <div class="rs btn" style="left:145px;top:186px;width:22px;height:20px;line-height:16px">+</div>
 <div class="sk" style="left:169px;top:186px;width:102px;height:20px"></div>
 <span class="t" style="left:172px;top:188px">Постоянный</span>
 <div class="rs" style="left:253px;top:188px;width:16px;height:16px"></div>
 <svg style="left:256px;top:193px" width="10" height="6" viewBox="0 0 10 6"><path d="M0 0h10L5 6z" fill="#000"/></svg>
 <div class="rs btn" style="left:121px;top:213px;width:107px;height:21px;line-height:16px">Все в начало</div>
 <div class="rs btn" style="left:230px;top:213px;width:117px;height:21px;line-height:16px">Задать отступ</div>
 <div class="sk1" style="left:128px;top:243px;width:11px;height:11px;border-color:#a3a3a3 #fff #fff #a3a3a3;background:#d9d9d9"></div>
 <span class="t" style="left:143px;top:241px;color:#a3a3a3">Игнорировать пределы</span>
 <span class="t" style="left:43px;top:277px">Шпиндель:</span>
 <div class="sk btn" style="left:121px;top:276px;width:52px;height:21px;line-height:19px">Стоп</div>
 <div class="rs" style="left:175px;top:276px;width:20px;height:20px"></div>
 <svg style="left:175px;top:276px" width="21" height="20" viewBox="175 276 21 20"><path d="M185.500 280.200a5.500 5.500 0 1 0 1 10.800" fill="none" stroke="#000" stroke-width="1.700"/><path d="M184.500 281.500v8.500M180 285.500h8" stroke="#000" stroke-width="1.100"/><path d="M185.500 279.800c3 .2 5 2 5.500 5" fill="none" stroke="#8b008b" stroke-width="1.800"/><path d="M188 284.500l5.800-1-2.600 5.200z" fill="#8b008b"/></svg>
 <div class="rs btn" style="left:121px;top:303px;width:22px;height:21px;line-height:19px;color:#a3a3a3">-</div>
 <div class="rs btn" style="left:145px;top:303px;width:22px;height:21px;line-height:19px;color:#a3a3a3">+</div>

 <!-- right notebook -->
 <div style="left:410px;top:157px;width:405px;height:342px;border:2px solid;border-color:#fff #828282 #828282 #fff;background:#e4e4e4"></div>
 <div style="left:452px;top:140px;width:95px;height:17px;border:2px solid;border-color:#fff #828282 #d9d9d9 #fff;border-bottom:0;border-radius:3px 5px 0 0"></div>
 <div style="left:410px;top:138px;width:43px;height:21px;background:#d9d9d9;border:2px solid;border-color:#fff #828282 #d9d9d9 #fff;border-bottom:0;border-radius:4px 5px 0 0"></div>
 <span class="t" style="left:418px;top:140px">Вид</span>
 <span class="t" style="left:458px;top:141px">Координаты</span>
 <div id="gl" style="left:412px;top:160px;width:400px;height:335px;background:#000;overflow:hidden"><svg style="left:0;top:0" width="400" height="335" viewBox="412 160 400 335">
 <g fill="none" stroke="#f00" stroke-width="1.25" stroke-dasharray="1.1 3" stroke-linecap="butt">
  <path d="M496 313L683 169L830 189.500"/><path d="M683 169L677 236L830 262.500"/><path d="M677 236L508 407L800 498"/><path d="M497 316L508 407"/><path d="M728 366L830 393"/>
 </g>
 <path d="M499.500 307.500L518 293" stroke="#f22" stroke-width="1"/>
 <!-- axes -->
 <path d="M494.500 312L488 259" stroke="#e8e020" stroke-width="2.600"/>
 <path d="M488 259L483.500 207" stroke="#6e6a10" stroke-width="2.400"/>
 <path d="M495 313L411 377" stroke="#ffff00" stroke-width="3"/>
 <!-- program outline cluster -->
 <g fill="none" stroke="#ff4545" stroke-width="1">
  <path d="M433 299l40 5-8.500 23.500L436 312.500z"/><path d="M439 303l14 2v20l-12-7z"/><path d="M449 302l12 2-1 14-10-3zM452 306v16l11 5 1-18"/><path d="M444 308l16 1M446 315l18 6"/>
 </g>
 <g fill="none" stroke="#ff8585" stroke-width="1">
  <path d="M433 313l30 9M440 318l24 8M467 307l10-8M476 309l8-9M484.500 325L720 384.500M716 386l6-5"/>
  <path d="M468 288l6-2M474 292l8-4M480 304l10-6M466 334l8 3"/>
 </g>
 <g fill="#ff8585" font-family="Liberation Sans,sans-serif" font-size="9">
  <text transform="translate(575 355) rotate(14) skewX(-30)" font-size="11.500" letter-spacing="1">134.7</text>
  <text transform="translate(710 414) rotate(-74) skewX(15)" font-size="11" letter-spacing=".6">136.5</text>
  <text transform="translate(469 288) rotate(22) skewX(-30)" font-size="8">20.4</text>
  <text transform="translate(474 301) rotate(-30) skewX(-20)" font-size="8">10.0</text>
  <text transform="translate(438 318) rotate(18)" font-size="7">2.0</text>
  <text transform="translate(470 336) rotate(15)" font-size="7">1.0</text>
 </g>
 <!-- rapids / feed -->
 <path d="M496 312l52-10 44 14 46 14 50 16" fill="none" stroke="#3f9b9b" stroke-width="1" stroke-dasharray="3 3"/>
 <path d="M498 314l18-4 22-2" fill="none" stroke="#3f9b9b" stroke-width="1" stroke-dasharray="3 3"/>
 <path d="M496 313l45 10" stroke="#1fe01f" stroke-width="1.300"/><path d="M538 320l3 5" stroke="#1fe01f" stroke-width="1"/>
 <!-- LinuxCNC outline text -->

 <!-- cone -->
 <path d="M482 286L494.500 312.500L506 286z" fill="#e8e8e8" fill-opacity=".55"/>
 <ellipse cx="494" cy="285.500" rx="12" ry="5" fill="#9c9c9c" fill-opacity=".85"/>
 <path d="M494.500 312L490.500 279" stroke="#f4f0a0" stroke-width="2.400" stroke-opacity=".75"/>
 <!-- DRO -->
 <g font-family="Liberation Mono,monospace" font-size="13.600" font-weight="bold" fill="#fff" letter-spacing=".84">
  <text x="462" y="183">X:</text><text x="516" y="183">1.000</text>
  <text x="462" y="201">Y:</text><text x="516" y="201">1.000</text>
  <text x="462" y="219">Z:</text><text x="507" y="219">-1.000</text>
  <text x="444" y="237">Vel:</text><text x="516" y="237">0.000</text>
  <text x="444" y="255">DTG:</text><text x="516" y="255">0.000</text>
 </g>
 <g id="hm"><circle cx="569.500" cy="178.500" r="4.800" fill="#fff"/><path d="M569.500 171.500v14M562.500 178.500h14" stroke="#fff" stroke-width="1"/><path d="M569.500 174.500v8M565.500 178.500h8" stroke="#000" stroke-width="1"/></g>
 <use href="#hm" y="18"/><use href="#hm" y="36"/>
</svg><div style="left:0;top:0;width:193.33px;height:28.7px;transform-origin:0 0;transform:matrix3d(0.829682,0.0761382,0,-0.00100189,-0.720985,0.415925,0,0.000122541,0,0,1,0,108.5,141.3,0,1);font:bold 40px/28.7px 'Liberation Sans',sans-serif;color:transparent;-webkit-text-stroke:1.25px #fff;white-space:nowrap">LinuxCNC</div></div>
 <!-- sliders -->
 <span class="t" style="left:37px;top:420px">Изменить подачу:</span><span class="t" style="left:203px;top:420px;width:100px;text-align:right">100 %</span>
 <span class="t" style="left:37px;top:441px">Скорость шпинделя:</span><span class="t" style="left:203px;top:441px;width:100px;text-align:right">100 %</span>
 <span class="t" style="left:37px;top:462px">Скорость перемещений</span><span class="t" style="left:193px;top:462px;width:100px;text-align:right">145 mm/min</span>
 <span class="t" style="left:37px;top:483px">Максимальная скорость:</span><span class="t" style="left:200px;top:483px;width:100px;text-align:right">1500 mm/min</span>
 <div class="tr" style="top:420px"><div class="th" style="left:57px"></div></div>
 <div class="tr" style="top:441px"><div class="th" style="left:57px"></div></div>
 <div class="tr" style="top:462px"><div class="th" style="left:16px"></div></div>
 <div class="tr" style="top:483px"><div class="th" style="left:68px"></div></div>
 <div class="rs1" style="left:43px;top:502px;width:5px;height:5px"></div>

 <!-- gcode text -->
 <div style="left:37px;top:507px;width:779px;height:141px;border:2px solid;border-color:#828282 #fff #fff #828282;background:#fff;overflow:hidden"></div>
 <div class="mono" style="left:39px;top:511px"><i>     1:</i> ( AXIS "splash g-code" Not intended for actual milling )
<i>     2:</i> ( To run this code anyway you might have to Touch Off the Z axis)
<i>     3:</i> ( depending on your setup. As if you had some material in your mill... )
<i>     4:</i> ( Hint jog the Z axis down a bit then touch off )
<i>     5:</i> ( Also press the Toggle Skip Lines with "/" to see that part )
<i>     6:</i> ( If the program is too big or small for your machine, change the scale #3 )
<i>     7:</i> ( LinuxCNC 19/1/2012 2:13:51 PM )
<i>     8:</i> G21 G90 G64 G40
<i>     9:</i> G0 Z3.0</div>
 <!-- gcode scrollbar -->
 <div style="left:802px;top:509px;width:12px;height:137px;background:#d9d9d9"></div>
 <div style="left:814px;top:507px;width:2px;height:141px;background:#fff"></div>
 <div style="left:802px;top:507px;width:14px;height:2px;background:#828282"></div>
 <svg style="left:802px;top:509px" width="12" height="20" viewBox="0 0 12 20"><path d="M6.500 .5L1 11.500h10.500z" fill="#d9d9d9"/><path d="M6.300 .5L.8 11.500" stroke="#fff" stroke-width="1.300" fill="none"/><path d="M6.500 .5l5 10.500H1" stroke="#828282" stroke-width="1.400" fill="none"/><path d="M.5 14.500h11" stroke="#fff" stroke-width="1"/><path d="M11.500 14v3.500H.8" stroke="#828282" stroke-width="1.300" fill="none"/></svg>
 <!-- status bar -->
 <div class="sk1 t" style="left:35px;top:650px;width:117px;height:19px;padding-left:2px;line-height:19px">ВКЛ</div>
 <div class="sk1 t" style="left:153px;top:650px;width:246px;height:19px;padding-left:2px;line-height:19px">Без инструмента</div>
 <div class="sk1 t" style="left:400px;top:650px;width:205px;height:19px;padding-left:2px;line-height:19px;overflow:hidden">Позиция: Относительная Насто:</div>

 <!-- notification -->
 <div style="left:700px;top:617px;width:257px;height:31px;background:#d9d9d9"></div>
 <span class="t" style="left:702px;top:625px">Unable to open file &lt;zerro_on_z&gt;</span>
 <svg style="left:903px;top:615px" width="34" height="34" viewBox="0 0 34 34"><defs><radialGradient id="rg1" cx=".4" cy=".3" r=".8"><stop offset="0" stop-color="#ff5a5a"/><stop offset=".6" stop-color="#ee1111"/><stop offset="1" stop-color="#b00000"/></radialGradient></defs><circle cx="17" cy="17" r="15" fill="url(#rg1)" stroke="#7a0000" stroke-width="1.2"/><path d="M11 11l12 12M23 11L11 23" stroke="#fff" stroke-width="4.2" stroke-linecap="round"/></svg>
 <div class="rs1" style="left:939px;top:625px;width:15px;height:15px;border-width:1px 2px 2px 1px"></div>
 <svg style="left:941px;top:627px" width="10" height="10" viewBox="0 0 10 10"><path d="M1 1l8 8M9 1L1 9" stroke="#000" stroke-width="1.3"/></svg>

</div></div>

<!-- PANELS -->
<div id="tpanel" class="abs">
 <svg class="abs" style="left:9px;top:2px" width="20" height="20" viewBox="0 0 20 20"><circle cx="10" cy="10" r="5.200" fill="none" stroke="#2b2a27" stroke-width="2.800" stroke-dasharray="8.600 2.290" stroke-dashoffset="9.750"/><circle cx="2.200" cy="10" r="1.700" fill="#2b2a27"/><circle cx="13.900" cy="3.200" r="1.700" fill="#2b2a27"/><circle cx="13.900" cy="16.800" r="1.700" fill="#2b2a27"/></svg>
 <span style="left:36px">Приложения</span><span style="left:140px">Переход</span><span style="left:213px">Система</span>
 <!-- firefox -->
 <svg class="abs" style="left:279px;top:0" width="24" height="24" viewBox="0 0 24 24"><defs><radialGradient id="ffb" cx=".5" cy=".35" r=".6"><stop offset="0" stop-color="#8fd0f5"/><stop offset=".6" stop-color="#2b76c4"/><stop offset="1" stop-color="#173f8a"/></radialGradient><linearGradient id="ffo" x1="0" y1="0" x2="0" y2="1"><stop offset="0" stop-color="#f9b233"/><stop offset=".5" stop-color="#ee7a17"/><stop offset="1" stop-color="#d7431a"/></linearGradient></defs><circle cx="12.500" cy="10.500" r="9" fill="url(#ffb)"/><path d="M2.500 6C1 10 1.300 15.500 4.500 19c3.500 3.800 10 4.300 14.500 1.300 4-2.700 5.300-8 4-12.300-.5-1.800-1.500-3.500-2.800-4.800.8 2 .8 3.500.5 5 .3 2.800-.7 5.500-3.200 7-2.300 1.300-5.500 1-7.300-1-1-1.200-1-2.700.3-3.200 1.300-.5 2.500.3 3.500-.3l1.500-1.700c-1.300-.2-2.300-1-2.500-2-1.700-.2-3 .8-4 .5C8 6 6.800 4.800 6.800 3 5.500 3.800 4.500 5 4.200 6.500 3.700 6.500 3 6.300 2.500 6z" fill="url(#ffo)"/></svg>
 <!-- help -->
 <svg class="abs" style="left:304px;top:0" width="23" height="24" viewBox="0 0 23 24"><defs><linearGradient id="hpg" x1="0" y1="0" x2="0" y2="1"><stop offset="0" stop-color="#5d9bd0"/><stop offset="1" stop-color="#2b62a0"/></linearGradient></defs><circle cx="11.300" cy="11.700" r="10.700" fill="url(#hpg)" stroke="#2a5a94" stroke-width=".8"/><text x="11.300" y="17.500" text-anchor="middle" font-family="DejaVu Sans,sans-serif" font-weight="bold" font-size="16" fill="#fff">?</text></svg>
 <!-- chromium -->
 <svg class="abs" style="left:328px;top:1px" width="22" height="22" viewBox="0 0 22 22"><circle cx="11" cy="11" r="10.300" fill="#a9c6e6"/><path d="M11 11L2.100 5.800A10.300 10.300 0 0 1 20 6z" fill="#5f8fc9"/><path d="M11 11l9-5a10.300 10.300 0 0 1-8.500 15.300z" fill="#c9dcf1"/><circle cx="11" cy="11" r="4.700" fill="#d6e5f5"/><circle cx="11" cy="11" r="3.600" fill="#5b8fd0"/></svg>
 <!-- grip -->
 <div class="abs" style="left:914px;top:4px;width:5px;height:17px;background:radial-gradient(circle at 1px 1px,#c2c0bc 0.600px,transparent .85px) 0 0/3px 3px"></div>
 <span style="left:922px;top:4.5px;font-family:'DejaVu Sans Condensed','DejaVu Sans',sans-serif;font-size:12.500px;transform:scaleX(.82);transform-origin:0 0;color:#2b2a27">Англ</span>
 <svg class="abs" style="left:948px;top:3px" width="20" height="19" viewBox="0 0 20 19"><path d="M6 1L1 6.500h3v6.500h4V6.500h3zM14.500 18l-5-5.500h3V6h4v6.500h3z" fill="#33322e"/></svg>
 <svg class="abs" style="left:977px;top:6px" width="14" height="12" viewBox="0 0 14 12"><path d="M.5 4h2.500L7 .8v10.400L3 8H.5z" fill="#33322e"/><path d="M9.500 2.500c1.800 2 1.800 5 0 7" fill="none" stroke="#33322e" stroke-width="1.500"/></svg>
 <svg class="abs" style="left:1015px;top:5px" width="18" height="13" viewBox="0 0 18 13"><rect x=".3" y=".3" width="17.400" height="12.400" rx="1.500" fill="#33322e"/><path d="M1.500 1.500L9 8l7.500-6.500M1.500 11.500L7 6.500M16.500 11.500L11 6.500" fill="none" stroke="#e8e6e2" stroke-width="1"/></svg>
 <span style="left:1061px;word-spacing:-1.300px">Втр,&nbsp; 4 Ноя, 21:29</span>
 <svg class="abs" style="left:1192px;top:3px" width="20" height="18" viewBox="0 0 20 18"><circle cx="9" cy="9" r="8" fill="#33322e"/><path d="M13 14l5.500 2-3-5z" fill="#33322e"/><path d="M6 6l6 6M12 6l-6 6" stroke="#edecea" stroke-width="2.200"/></svg>
 <span style="left:1215px">cnc</span>
 <svg class="abs" style="left:1253px;top:3px" width="18" height="18" viewBox="0 0 18 18"><path d="M5.500 4.500a6.300 6.300 0 1 0 7 0" fill="none" stroke="#33322e" stroke-width="1.900" stroke-linecap="round"/><path d="M9 1.500v7" stroke="#33322e" stroke-width="1.900" stroke-linecap="round"/></svg>
</div>
<div id="bpanel" class="abs">
 <div class="abs" style="left:3px;top:4px;width:18px;height:17px;border-radius:2.500px;background:#8e2f8e;border:1px solid #5a1a5a"></div>
 <div class="abs" style="left:5px;top:6px;width:14px;height:3px;background:#e8dfe8"></div><div class="abs" style="left:5px;top:10px;width:14px;height:9px;background:#b04ab0"></div>
 <div class="abs" style="left:27px;top:4px;width:5px;height:17px;background:radial-gradient(circle at 1px 1px,#c2c0bc 0.600px,transparent .85px) 0 0/3px 3px"></div>
 <div class="task" style="left:35px;width:225px"><svg class="abs" style="left:8px;top:3px" width="15" height="15" viewBox="0 0 22 22"><circle cx="11" cy="11" r="10.300" fill="#a9c6e6"/><path d="M11 11L2.100 5.800A10.300 10.300 0 0 1 20 6z" fill="#5f8fc9"/><path d="M11 11l9-5a10.300 10.300 0 0 1-8.500 15.300z" fill="#c9dcf1"/><circle cx="11" cy="11" r="4.700" fill="#d6e5f5"/><circle cx="11" cy="11" r="3.600" fill="#5b8fd0"/></svg><b style="left:30px">Датчик длины инструме...</b></div>
 <div class="task" style="left:263px;width:225px"><svg class="abs" style="left:6px;top:3px" width="17" height="15" viewBox="0 0 17 15"><path d="M.5 14V1.500h5l1.500 2h7V14z" fill="#e6e4e0" stroke="#9a9893" stroke-width=".8"/><rect x="2" y="5" width="11" height="9" fill="#e2572a"/><path d="M9 6l6 6.500-2.800.2 1.300 2.300-1.200.6-1.300-2.400L9 15z" fill="#ddd" stroke="#555" stroke-width=".6"/></svg><b style="left:30px">CNC_4444 — обозревате...</b></div>
 <div class="task" style="left:490px;width:228px;background:linear-gradient(#c2c0bc,#cfcdc9);border-color:#8a8884"><svg class="abs" style="left:8px;top:3px" width="16" height="16" viewBox="0 0 18 18"><g stroke="#000" stroke-width="1" fill="none"><path d="M2.500 2.500h3M4 2.500v8M2.500 10.500h3"/><path d="M6.500 2.500l8 8M14.500 2.500l-8 8"/><path d="M6.500 13.500h8M6.500 12v3M14.500 12v3"/></g></svg><b style="left:32px">axis.ngc</b></div>
 <!-- workspace switcher -->
 <div class="abs" style="left:1151px;top:1px;width:102px;height:23px;background:#aaa6a1;border-radius:3px;overflow:hidden"><div class="abs" style="left:0;top:0;width:25px;height:23px;background:#4f7ab8"></div><div class="abs" style="left:2px;top:1px;width:18px;height:11px;background:#cfe0f6;border:1px solid #fff"></div><div class="abs" style="left:5px;top:4px;width:20px;height:17px;background:#7ea5dc;border:1px solid #fff;border-right:0"></div><div class="abs" style="left:2px;top:1px;width:18px;height:11px;background:#cfe0f6;border:1px solid #fff"></div><div class="abs" style="left:25px;top:0;width:1px;height:23px;background:#e8e6e3"></div><div class="abs" style="left:51px;top:0;width:1px;height:23px;background:#e8e6e3"></div><div class="abs" style="left:76px;top:0;width:1px;height:23px;background:#e8e6e3"></div></div>
 <!-- trash -->
 <svg class="abs" style="left:1257px;top:1px" width="20" height="23" viewBox="0 0 20 23"><defs><linearGradient id="trg" x1="0" y1="0" x2="1" y2="0"><stop offset="0" stop-color="#b9b9b7"/><stop offset=".4" stop-color="#f1f1f0"/><stop offset="1" stop-color="#a9a9a7"/></linearGradient></defs><path d="M2 3.500l2 17.500c2 1.800 10 1.800 12 0l2-17.500z" fill="url(#trg)" stroke="#8a8a88" stroke-width=".7"/><ellipse cx="10" cy="3.500" rx="8.500" ry="2.300" fill="#d6d6d4" stroke="#7d7d7b" stroke-width=".9"/></svg>
</div>
<svg class="abs" style="left:498px;top:547px;filter:drop-shadow(0 1px 1px rgba(0,0,0,.4))" width="18" height="26" viewBox="498 547 18 26"><path d="M501.500 550.700V568l3.500-3.600 2.300 4.700 2.600-1.100-2.200-4.700 5-.5z" fill="#fff" stroke="#000" stroke-width="1.100" stroke-linejoin="round"/></svg>
</body>
</html>
